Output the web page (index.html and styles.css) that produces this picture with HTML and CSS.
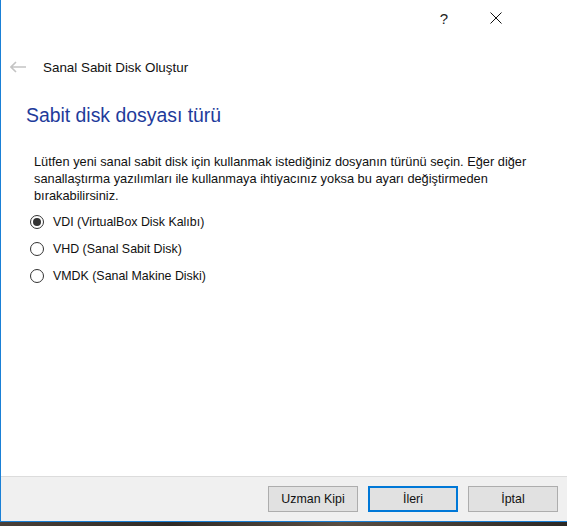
FILE: index.html
```html
<!DOCTYPE html>
<html lang="tr">
<head>
<meta charset="utf-8">
<title>Sanal Sabit Disk Oluştur</title>
<link rel="stylesheet" href="styles.css">
</head>
<body>
<div class="window">
  <div class="main">
    <div class="titlebar">
      <span class="help">?</span>
      <svg class="close" width="12" height="12" viewBox="0 0 12 12"><path d="M0.5 0.5 L11.5 11.5 M11.5 0.5 L0.5 11.5" stroke="#111" stroke-width="1"/></svg>
    </div>
    <div class="navbar">
      <svg class="back" width="16" height="12" viewBox="0 0 16 12"><path d="M1 6 H16 M6 1 L1 6 L6 11" stroke="#c4c4c4" stroke-width="1.6" fill="none"/></svg>
      <span class="navtitle">Sanal Sabit Disk Oluştur</span>
    </div>
    <h1 class="heading">Sabit disk dosyası türü</h1>
    <p class="desc">Lütfen yeni sanal sabit disk için kullanmak istediğiniz dosyanın türünü seçin. Eğer diğer sanallaştırma yazılımları ile kullanmaya ihtiyacınız yoksa bu ayarı değiştirmeden bırakabilirsiniz.</p>
    <div class="options">
      <label class="opt"><span class="radio checked"></span>VDI (VirtualBox Disk Kalıbı)</label>
      <label class="opt"><span class="radio"></span>VHD (Sanal Sabit Disk)</label>
      <label class="opt"><span class="radio"></span>VMDK (Sanal Makine Diski)</label>
    </div>
  </div>
  <div class="footer">
    <button class="btn">Uzman Kipi</button>
    <button class="btn primary">İleri</button>
    <button class="btn">İptal</button>
  </div>
</div>
<div class="desktop"></div>
</body>
</html>
```
FILE: styles.css
```css
html, body {
  margin: 0;
  padding: 0;
}
body {
  width: 567px;
  height: 526px;
  overflow: hidden;
  background: #3b342c;
  font-family: "Liberation Sans", Arial, sans-serif;
  color: #000;
}
.window {
  height: 521px;
  border-left: 1px solid #1a80d6;
  border-bottom: 1px solid #1a80d6;
  display: flex;
  flex-direction: column;
  background: #fff;
}
.main {
  height: 476px;
  background: #fff;
  display: flex;
  flex-direction: column;
}
.titlebar {
  height: 36px;
  display: flex;
  align-items: center;
  justify-content: flex-end;
}
.help {
  font-size: 15px;
  color: #222;
  margin-right: 42px;
}
.close {
  margin-right: 65px;
}
.back {
  margin-left: 9px;
  margin-right: 17px;
}
.navbar {
  height: 62px;
  display: flex;
  align-items: center;
}
.navtitle {
  font-size: 13.4px;
  color: #111;
}
.heading {
  margin: 4px 0 0 25px;
  font-weight: normal;
  font-size: 19.4px;
  color: #1e3b9b;
  line-height: 26px;
}
.desc {
  margin: 25px 20px 0 33px;
  font-size: 12.8px;
  line-height: 17px;
  color: #111;
}
.options {
  margin: 4px 0 0 29px;
  display: flex;
  flex-direction: column;
}
.opt {
  height: 27px;
  display: flex;
  align-items: center;
  font-size: 12.4px;
  color: #111;
}
.radio {
  width: 14px;
  height: 14px;
  border: 1px solid #333;
  border-radius: 50%;
  margin-right: 9px;
  position: relative;
  box-sizing: border-box;
}
.radio.checked::after {
  content: "";
  position: absolute;
  left: 2px;
  top: 2px;
  width: 8px;
  height: 8px;
  border-radius: 50%;
  background: #333;
}
.footer {
  flex: 1;
  background: #f0f0f0;
  border-top: 1px solid #dcdcdc;
  display: flex;
  justify-content: flex-end;
  align-items: flex-start;
  padding: 9px 9px 0 0;
  gap: 10px;
}
.btn {
  width: 90px;
  height: 26px;
  background: #e1e1e1;
  border: 1px solid #adadad;
  font-family: "Liberation Sans", Arial, sans-serif;
  font-size: 12.4px;
  color: #111;
  padding: 0;
}
.btn.primary {
  border: 2px solid #0078d7;
}
.desktop {
  height: 4px;
  background: linear-gradient(90deg, #4a4038, #2f2a25 30%, #5a4e42 60%, #2c2824);
}
```
